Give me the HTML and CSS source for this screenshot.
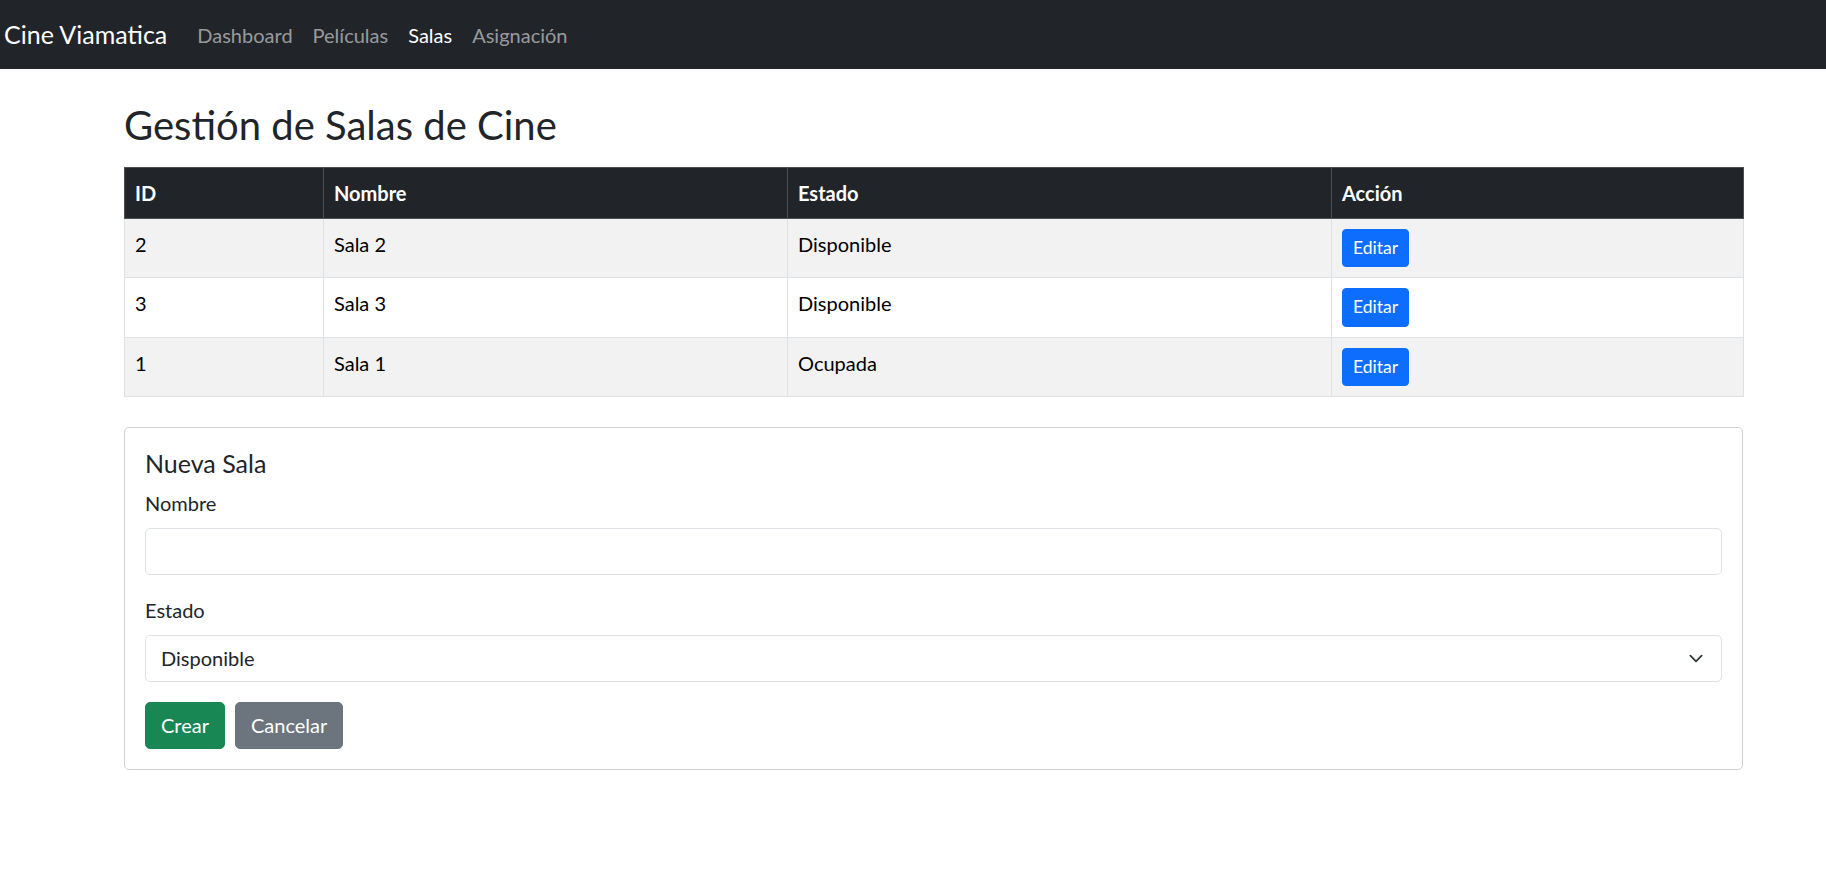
FILE: index.html
```html
<!DOCTYPE html>
<html lang="es">
<head>
<meta charset="utf-8">
<title>Cine Viamatica - Salas</title>
<link rel="stylesheet" href="styles.css">
</head>
<body>
<nav class="navbar">
  <a class="brand" href="#">Cine Viamatica</a>
  <ul class="nav-links">
    <li><a class="nav-link" href="#">Dashboard</a></li>
    <li><a class="nav-link" href="#">Películas</a></li>
    <li><a class="nav-link active" href="#">Salas</a></li>
    <li><a class="nav-link" href="#">Asignación</a></li>
  </ul>
</nav>
<main class="page">
  <h2 class="page-title">Gestión de Salas de Cine</h2>
  <table class="salas-table">
    <thead>
      <tr>
        <th class="col-id">ID</th>
        <th class="col-nombre">Nombre</th>
        <th class="col-estado">Estado</th>
        <th class="col-accion">Acción</th>
      </tr>
    </thead>
    <tbody>
      <tr>
        <td>2</td><td>Sala 2</td><td>Disponible</td>
        <td><button class="btn btn-sm btn-primary" type="button">Editar</button></td>
      </tr>
      <tr>
        <td>3</td><td>Sala 3</td><td>Disponible</td>
        <td><button class="btn btn-sm btn-primary" type="button">Editar</button></td>
      </tr>
      <tr>
        <td>1</td><td>Sala 1</td><td>Ocupada</td>
        <td><button class="btn btn-sm btn-primary" type="button">Editar</button></td>
      </tr>
    </tbody>
  </table>
  <section class="card">
    <h5 class="card-title">Nueva Sala</h5>
    <div class="field">
      <label class="form-label" for="nombre">Nombre</label>
      <input class="form-control" id="nombre" type="text">
    </div>
    <div class="field">
      <label class="form-label" for="estado">Estado</label>
      <div class="select-wrap">
        <select class="form-control form-select" id="estado">
          <option>Disponible</option>
          <option>Ocupada</option>
        </select>
        <svg class="chevron" viewBox="0 0 16 16" width="20" height="15" aria-hidden="true"><path fill="none" stroke="#343a40" stroke-linecap="round" stroke-linejoin="round" stroke-width="2" d="m2 5 6 6 6-6"/></svg>
      </div>
    </div>
    <div class="actions">
      <button class="btn btn-success" type="button">Crear</button>
      <button class="btn btn-secondary" type="button">Cancelar</button>
    </div>
  </section>
</main>
</body>
</html>
```
FILE: styles.css
```css
* { box-sizing: border-box; }

body {
  margin: 0;
  font-family: Lato, "Liberation Sans", sans-serif;
  font-size: 20px;
  line-height: 1.5;
  color: #212529;
  background: #fff;
}

.navbar {
  display: flex;
  align-items: center;
  background: #212529;
  padding: 10px 0 10px 4px;
  height: 69px;
}

.brand {
  font-size: 25px;
  line-height: 37.5px;
  padding: 6px 0;
  margin-right: 20px;
  color: #fff;
  text-decoration: none;
}

.nav-links {
  display: flex;
  list-style: none;
  margin: 0;
  padding: 0;
}

.nav-link {
  display: block;
  padding: 10px;
  font-size: 20px;
  line-height: 30px;
  color: rgba(255, 255, 255, 0.55);
  text-decoration: none;
}

.nav-link.active { color: #fff; }

.page {
  padding: 32px 83px 40px 124px;
}

.page-title {
  margin: 0 0 18px;
  font-size: 40px;
  line-height: 48px;
  font-weight: 400;
}

.salas-table {
  width: 100%;
  border-collapse: collapse;
  table-layout: fixed;
  margin-bottom: 30px;
  color: #000;
}

.col-id { width: 199px; }
.col-nombre { width: 464px; }
.col-estado { width: 544px; }
.col-accion { width: 412px; }

.salas-table th {
  text-align: left;
  font-weight: 700;
  padding: 10px;
  line-height: 30px;
  background: #212529;
  color: #fff;
  border: 1px solid #4d5154;
}

.salas-table td {
  padding: 10px;
  line-height: 30px;
  vertical-align: top;
  border: 1px solid #dee2e6;
}

.salas-table tbody tr:nth-child(odd) td { background: #f2f2f2; }

.card {
  border: 1px solid rgba(0, 0, 0, 0.175);
  border-radius: 5px;
  padding: 20px;
}

.card-title {
  margin: 0 0 10px;
  font-size: 25px;
  line-height: 30px;
  font-weight: 400;
}

.field { margin-bottom: 20px; }

.form-label {
  display: block;
  margin-bottom: 10px;
  line-height: 30px;
}

.form-control {
  display: block;
  width: 100%;
  height: 47px;
  padding: 7.5px 15px;
  font-family: inherit;
  font-size: 20px;
  line-height: 30px;
  color: #212529;
  background: #fff;
  border: 1px solid #dee2e6;
  border-radius: 5px;
}

.select-wrap { position: relative; }

.form-select {
  appearance: none;
  -webkit-appearance: none;
  padding-right: 45px;
}

.chevron {
  position: absolute;
  right: 16px;
  top: 16px;
  pointer-events: none;
}

.actions {
  display: flex;
  gap: 10px;
}

.btn {
  display: inline-block;
  font-family: inherit;
  font-size: 20px;
  line-height: 30px;
  padding: 7.5px 15px;
  border: 1px solid transparent;
  border-radius: 5px;
  color: #fff;
  cursor: pointer;
}

.btn-sm {
  font-size: 17.5px;
  line-height: 26.25px;
  padding: 5px 10px;
  border-radius: 4px;
}

.btn-primary { background: #0d6efd; border-color: #0d6efd; }
.btn-success { background: #198754; border-color: #198754; }
.btn-secondary { background: #6c757d; border-color: #6c757d; }
```
